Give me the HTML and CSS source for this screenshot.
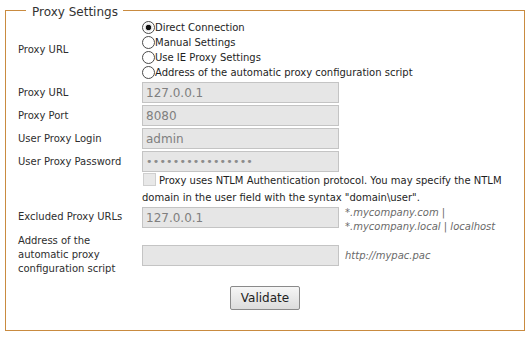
FILE: index.html
```html
<!DOCTYPE html>
<html>
<head>
<meta charset="utf-8">
<link rel="stylesheet" href="styles.css">
</head>
<body>
<fieldset class="panel">
  <legend class="panel-title">Proxy Settings</legend>
  <div class="form">
    <div class="lbl lbl-mid">Proxy URL</div>
    <div class="radios span2">
      <label class="radio"><input type="radio" name="mode" checked><span>Direct Connection</span></label>
      <label class="radio"><input type="radio" name="mode"><span>Manual Settings</span></label>
      <label class="radio"><input type="radio" name="mode"><span>Use IE Proxy Settings</span></label>
      <label class="radio"><input type="radio" name="mode"><span>Address of the automatic proxy configuration script</span></label>
    </div>

    <div class="lbl row">Proxy URL</div>
    <div class="cell row span2"><input class="field" type="text" value="127.0.0.1" disabled></div>

    <div class="lbl row">Proxy Port</div>
    <div class="cell row span2"><input class="field" type="text" value="8080" disabled></div>

    <div class="lbl row">User Proxy Login</div>
    <div class="cell row span2"><input class="field" type="text" value="admin" disabled></div>

    <div class="lbl row">User Proxy Password</div>
    <div class="cell row span2"><input class="field pw" type="password" value="abcdefghijklmnop" disabled></div>

    <div class="ntlm span-in">
      <span class="check"></span>Proxy uses NTLM Authentication protocol. You may specify the NTLM domain in the user field with the syntax "domain\user".
    </div>

    <div class="lbl lbl-top">Excluded Proxy URLs</div>
    <div class="cell cell-top"><input class="field" type="text" value="127.0.0.1" disabled></div>
    <div class="hint hint-two">*.mycompany.com |<br>*.mycompany.local | localhost</div>

    <div class="lbl lbl-multi">Address of the<br>automatic proxy<br>configuration script</div>
    <div class="cell cell-mid"><input class="field" type="text" value="" disabled></div>
    <div class="hint hint-mid">http://mypac.pac</div>

    <div class="actions"><button class="btn" type="button">Validate</button></div>
  </div>
</fieldset>
</body>
</html>
```

FILE: styles.css
```css
html, body {
  margin: 0;
  padding: 0;
  background: #ffffff;
}

body {
  font-family: "DejaVu Sans", Verdana, sans-serif;
  font-size: 10px;
  color: #333333;
}

.panel {
  margin: 1px 5px 0 5px;
  padding: 1px 12px 20px 12px;
  border: 1px solid #c98b40;
  min-width: 0;
}

.panel-title {
  margin-left: 8px;
  padding: 4px 5px 0 6px;
  font-size: 12px;
  line-height: 14px;
  color: #333333;
}

.form {
  display: grid;
  grid-template-columns: 124px 197px 1fr;
  align-items: center;
}

.span2 {
  grid-column: 2 / 4;
}

.span-in {
  grid-column: 2 / 4;
}

.lbl {
  grid-column: 1;
  color: #2e2e2e;
  line-height: 14px;
}

.lbl-mid {
  align-self: center;
}

.row {
  height: 23px;
}

.lbl.row {
  display: flex;
  align-items: center;
  padding-top: 2px;
  box-sizing: border-box;
}

.cell.row {
  display: flex;
  align-items: flex-end;
}

.radios {
  display: flex;
  flex-direction: column;
}

.radio {
  display: flex;
  align-items: center;
  height: 15px;
  line-height: 15px;
  color: #1e1e1e;
  white-space: nowrap;
}

.radio input {
  -webkit-appearance: none;
  appearance: none;
  width: 13px;
  height: 13px;
  margin: 0;
  border: 1px solid #4a4a4a;
  border-radius: 50%;
  background: #ffffff;
  box-sizing: border-box;
  flex: none;
}

.radio input:checked {
  background: radial-gradient(circle, #111111 0, #111111 2.4px, #d9d9d9 3px, #ffffff 4.5px);
}

.field {
  display: block;
  width: 197px;
  height: 21px;
  margin: 0;
  padding: 0 3px;
  box-sizing: border-box;
  border: 1px solid #c4c4c4;
  background: #e6e6e6;
  color: #7f7f7f;
  font-family: "DejaVu Sans", Verdana, sans-serif;
  font-size: 12px;
  outline: none;
}

.field.pw {
  font-size: 11px;
  letter-spacing: 0.2px;
  color: #8c8c8c;
}

.ntlm {
  line-height: 17px;
  color: #1e1e1e;
  padding-right: 6px;
}

.check {
  display: inline-block;
  width: 13px;
  height: 13px;
  box-sizing: border-box;
  border: 1px solid #cfcfcf;
  background: #e8e8e8;
  margin: 0 3px 0 1px;
  vertical-align: -2px;
}

.lbl-top {
  align-self: start;
  line-height: 20px;
  margin-top: 1px;
}

.cell-top {
  align-self: start;
  margin-top: 1px;
}

.hint {
  padding-left: 6px;
  font-style: italic;
  color: #6a6a6a;
  line-height: 14px;
}

.hint-two {
  align-self: start;
  height: 28px;
}

.lbl-multi {
  line-height: 14px;
}

.cell-mid {
  align-self: center;
}

.hint-mid {
  align-self: center;
  padding-top: 2px;
}

.actions {
  grid-column: 1 / 4;
  display: flex;
  justify-content: center;
  padding-top: 10px;
}

.btn {
  width: 70px;
  height: 24px;
  margin: 0;
  padding: 0;
  border: 1px solid #8a8a8a;
  border-radius: 2px;
  background: linear-gradient(#f6f6f6, #dcdcdc);
  color: #222222;
  font-family: "DejaVu Sans", Verdana, sans-serif;
  font-size: 12px;
}
```
